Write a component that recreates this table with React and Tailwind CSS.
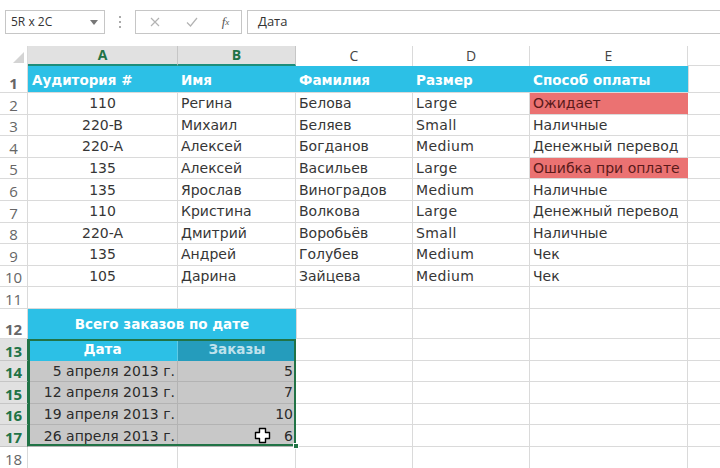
import React from "react";

const FONT = { fontFamily: '"DejaVu Sans", "Noto Sans", sans-serif' };
const UI = { fontFamily: '"Open Sans", "Noto Sans", sans-serif' };

const rows = [
  ["110", "Регина", "Белова", "Large", "Ожидает", true],
  ["220-B", "Михаил", "Беляев", "Small", "Наличные", false],
  ["220-A", "Алексей", "Богданов", "Medium", "Денежный перевод", false],
  ["135", "Алексей", "Васильев", "Large", "Ошибка при оплате", true],
  ["135", "Ярослав", "Виноградов", "Medium", "Наличные", false],
  ["110", "Кристина", "Волкова", "Large", "Денежный перевод", false],
  ["220-A", "Дмитрий", "Воробьёв", "Small", "Наличные", false],
  ["135", "Андрей", "Голубев", "Medium", "Чек", false],
  ["105", "Дарина", "Зайцева", "Medium", "Чек", false],
];

const orders = [
  ["5 апреля 2013 г.", "5"],
  ["12 апреля 2013 г.", "7"],
  ["19 апреля 2013 г.", "10"],
  ["26 апреля 2013 г.", "6"],
];

function RowHead({ n, sel }) {
  return (
    <div
      className={
        "w-[28px] shrink-0 flex items-end justify-center pb-[1px] border-r border-b text-[15px] leading-none " +
        (sel
          ? "bg-[#e1e1e1] border-r-[#217346] border-b-[#c6c6c6] text-[#217346] font-bold"
          : "bg-white border-[#dadada] text-[#666]")
      }
      style={UI}
    >
      {n}
    </div>
  );
}

function Grid() {
  return (
    <>
      <div className="w-[150px] shrink-0 border-r border-b border-[#dadada]" />
      <div className="w-[118px] shrink-0 border-r border-b border-[#dadada]" />
      <div className="w-[117px] shrink-0 border-r border-b border-[#dadada]" />
      <div className="w-[117px] shrink-0 border-r border-b border-[#dadada]" />
      <div className="w-[158px] shrink-0 border-r border-b border-[#dadada]" />
      <div className="flex-1 border-b border-[#dadada]" />
    </>
  );
}

function CDE() {
  return (
    <>
      <div className="w-[117px] shrink-0 border-r border-b border-[#dadada]" />
      <div className="w-[117px] shrink-0 border-r border-b border-[#dadada]" />
      <div className="w-[158px] shrink-0 border-r border-b border-[#dadada]" />
      <div className="flex-1 border-b border-[#dadada]" />
    </>
  );
}

export default function App() {
  return (
    <div className="w-[720px] h-[468px] bg-white overflow-hidden relative text-[#363636]" style={FONT}>
      {/* Toolbar */}
      <div className="h-[46px] flex items-start pt-[10px] pl-[5px]" style={UI}>
        <div className="w-[100px] h-[24px] border border-[#c6c6c6] flex items-center pl-[5px] pr-[6px] text-[12px] text-[#333]">
          <span className="flex-1">5R x 2C</span>
          <svg width="8" height="5" viewBox="0 0 8 5"><path d="M0 0h8L4 5z" fill="#777" /></svg>
        </div>
        <div className="w-[30px] h-[24px] flex flex-col items-center justify-center gap-[3px]">
          <div className="w-[2px] h-[2px] bg-[#aaa]" />
          <div className="w-[2px] h-[2px] bg-[#aaa]" />
          <div className="w-[2px] h-[2px] bg-[#aaa]" />
        </div>
        <div className="w-[107px] h-[24px] border border-[#c6c6c6] flex items-center">
          <div className="w-[37px] flex justify-center">
            <svg width="10" height="10" viewBox="0 0 10 10"><path d="M1 1L9 9M9 1L1 9" stroke="#b3b3b3" strokeWidth="1.2" /></svg>
          </div>
          <div className="w-[37px] flex justify-center">
            <svg width="12" height="10" viewBox="0 0 12 10"><path d="M1 5.5L4.5 9L11 1" stroke="#b3b3b3" strokeWidth="1.2" fill="none" /></svg>
          </div>
          <div className="w-[31px] flex justify-center text-[13px] italic text-[#555]" style={{ fontFamily: '"Liberation Serif", serif' }}>
            f<span className="text-[9px] mt-[4px]">x</span>
          </div>
        </div>
        <div className="ml-[5px] flex-1 h-[24px] border-y border-l border-[#c6c6c6] flex items-center pl-[10px] text-[13px] text-[#333]">
          Дата
        </div>
      </div>

      {/* Column headers */}
      <div className="h-[20px] flex text-[14px] leading-none" style={UI}>
        <div className="w-[28px] shrink-0 border-r border-[#dadada] flex items-end justify-end pb-[3px] pr-[3px]">
          <svg width="11" height="11" viewBox="0 0 11 11"><path d="M11 0V11H0z" fill="#d4d4d4" /></svg>
        </div>
        <div className="w-[150px] shrink-0 bg-[#e1e1e1] border-r border-[#c6c6c6] border-b-2 border-b-[#1d8d7a] flex items-center justify-center font-bold text-[#217346]">A</div>
        <div className="w-[118px] shrink-0 bg-[#e1e1e1] border-r border-[#c6c6c6] border-b-2 border-b-[#1d8d7a] flex items-center justify-center font-bold text-[#217346]">B</div>
        <div className="w-[117px] shrink-0 border-r border-[#dadada] flex items-center justify-center text-[#444]">C</div>
        <div className="w-[117px] shrink-0 border-r border-[#dadada] flex items-center justify-center text-[#444]">D</div>
        <div className="w-[158px] shrink-0 border-r border-[#dadada] flex items-center justify-center text-[#444]">E</div>
        <div className="flex-1 border-b border-[#dadada]" />
      </div>

      {/* Row 1 */}
      <div className="h-[27px] flex text-[13.5px] font-bold text-white">
        <RowHead n={1} />
        <div className="w-[150px] shrink-0 bg-[#2cc0e6] border-b border-[#dadada] flex items-end pb-[2px] pl-[4px]">Аудитория #</div>
        <div className="w-[118px] shrink-0 bg-[#2cc0e6] border-b border-[#dadada] flex items-end pb-[2px] pl-[3px]">Имя</div>
        <div className="w-[117px] shrink-0 bg-[#2cc0e6] border-b border-[#dadada] flex items-end pb-[2px] pl-[3px]">Фамилия</div>
        <div className="w-[117px] shrink-0 bg-[#2cc0e6] border-b border-[#dadada] flex items-end pb-[2px] pl-[3px]">Размер</div>
        <div className="w-[158px] shrink-0 bg-[#2cc0e6] border-b border-[#dadada] flex items-end pb-[2px] pl-[3px]">Способ оплаты</div>
        <div className="flex-1 border-b border-l border-[#dadada]" />
      </div>

      {/* Rows 2-10 */}
      {rows.map((r, i) => (
        <div key={i} className="h-[21.6px] flex text-[14px] leading-none">
          <RowHead n={i + 2} />
          <div className="w-[150px] shrink-0 border-r border-b border-[#dadada] flex items-center justify-center">{r[0]}</div>
          <div className="w-[118px] shrink-0 border-r border-b border-[#dadada] flex items-center pl-[3px]">{r[1]}</div>
          <div className="w-[117px] shrink-0 border-r border-b border-[#dadada] flex items-center pl-[3px]">{r[2]}</div>
          <div className="w-[117px] shrink-0 border-r border-b border-[#dadada] flex items-center pl-[3px] tracking-[0.4px]">{r[3]}</div>
          <div
            className={
              "w-[158px] shrink-0 border-r border-b flex items-center pl-[3px] whitespace-nowrap " +
              (r[5] ? "bg-[#eb7272] border-r-[#eb7272] border-b-[#dadada] text-[#5a1a1a]" : "border-[#dadada]")
            }
          >
            {r[4]}
          </div>
          <div className="flex-1 border-b border-[#dadada]" />
        </div>
      ))}

      {/* Row 11 */}
      <div className="h-[21.6px] flex">
        <RowHead n={11} />
        <Grid />
      </div>

      {/* Row 12 */}
      <div className="h-[30px] flex text-[13.5px] font-bold text-white">
        <RowHead n={12} />
        <div className="w-[268px] shrink-0 bg-[#2cc0e6] flex items-center justify-center">Всего заказов по дате</div>
        <div className="w-[117px] shrink-0 border-r border-b border-l border-[#dadada]" />
        <div className="w-[117px] shrink-0 border-r border-b border-[#dadada]" />
        <div className="w-[158px] shrink-0 border-r border-b border-[#dadada]" />
        <div className="flex-1 border-b border-[#dadada]" />
      </div>

      {/* Row 13 */}
      <div className="h-[21.6px] flex text-[13.5px] font-bold leading-none">
        <RowHead n={13} sel />
        <div className="w-[150px] shrink-0 bg-[#2cc0e6] border-r border-[#5fcbe6] flex items-center justify-center text-white">Дата</div>
        <div className="w-[118px] shrink-0 bg-[#259cbc] flex items-center justify-center text-[#bfe2ec]">Заказы</div>
        <CDE />
      </div>

      {/* Rows 14-17 */}
      {orders.map((o, i) => (
        <div key={i} className="h-[21.6px] flex text-[14px] leading-none">
          <RowHead n={14 + i} sel />
          <div className="w-[150px] shrink-0 bg-[#c8c8c8] border-r border-b border-[#b3b3b3] flex items-center justify-end pr-[2px] text-[#2b2b2b]">{o[0]}</div>
          <div className="w-[118px] shrink-0 bg-[#c8c8c8] border-b border-[#b3b3b3] flex items-center justify-end pr-[3px] text-[#2b2b2b]">{o[1]}</div>
          <CDE />
        </div>
      ))}

      {/* Row 18 */}
      <div className="h-[21.6px] flex">
        <RowHead n={18} />
        <Grid />
      </div>

      {/* Selection border */}
      <div className="absolute left-[28px] top-[339px] w-[268px] h-[107px] border-2 border-[#217346] pointer-events-none" />
      <div className="absolute left-[293px] top-[443px] w-[6px] h-[6px] bg-[#217346] border border-white" />

      {/* Cursor */}
      <svg className="absolute left-[254px] top-[427px]" width="17" height="17" viewBox="0 0 17 17">
        <path d="M5.5 1.5h6v4h4v6h-4v4h-6v-4h-4v-6h4z" fill="#fff" stroke="#000" strokeWidth="1.4" strokeLinejoin="round" />
      </svg>
    </div>
  );
}
